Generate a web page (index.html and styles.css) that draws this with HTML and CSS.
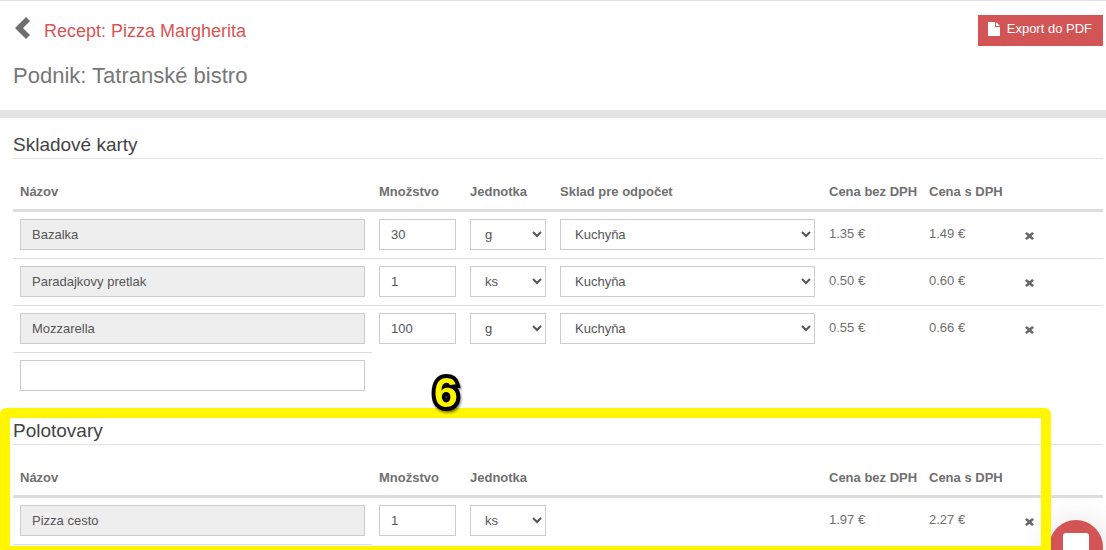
FILE: index.html
```html
<!DOCTYPE html>
<html lang="sk">
<head>
<meta charset="utf-8">
<title>Recept: Pizza Margherita</title>
<link rel="stylesheet" href="styles.css">
</head>
<body>
<svg class="sprite" aria-hidden="true">
  <symbol id="cross" viewBox="0 0 9 8"><path d="M0 1.8 1.8 0 4.5 2.2 7.2 0 9 1.8 6.3 4 9 6.2 7.2 8 4.5 5.8 1.8 8 0 6.2 2.7 4z"/></symbol>
</svg>
<header class="page-header">
  <div class="title-row">
    <a class="back" href="#" aria-label="Späť"><svg viewBox="0 0 15 22" aria-hidden="true"><path d="M11 0 15 4 8 11 15 18 11 22 0 11z"/></svg></a>
    <h1 class="title">Recept: Pizza Margherita</h1>
    <button class="export" type="button"><svg viewBox="0 0 12 14" aria-hidden="true"><path d="M0 0h7v5h5v9H0zM8 0l4 4H8z"/></svg>Export do PDF</button>
  </div>
  <h2 class="company">Podnik: Tatranské bistro</h2>
</header>
<main class="content">
  <section class="section">
    <h3 class="section-title">Skladové karty</h3>
    <table class="items">
      <colgroup><col><col class="c-qty"><col class="c-unit"><col class="c-stock"><col class="c-net"><col class="c-gross"><col class="c-action"></colgroup>
      <thead><tr><th>Názov</th><th>Množstvo</th><th>Jednotka</th><th>Sklad pre odpočet</th><th>Cena bez DPH</th><th>Cena s DPH</th><td></td></tr></thead>
      <tbody>
        <tr>
          <td><input class="field" aria-label="Názov" value="Bazalka" disabled></td>
          <td><input class="field" aria-label="Množstvo" value="30"></td>
          <td><select class="field" aria-label="Jednotka"><option>g</option></select></td>
          <td><select class="field" aria-label="Sklad pre odpočet"><option>Kuchyňa</option></select></td>
          <td class="price">1.35 €</td><td class="price">1.49 €</td>
          <td><button class="remove" type="button" aria-label="Odstrániť"><svg><use href="#cross"/></svg></button></td>
        </tr>
        <tr>
          <td><input class="field" aria-label="Názov" value="Paradajkovy pretlak" disabled></td>
          <td><input class="field" aria-label="Množstvo" value="1"></td>
          <td><select class="field" aria-label="Jednotka"><option>ks</option></select></td>
          <td><select class="field" aria-label="Sklad pre odpočet"><option>Kuchyňa</option></select></td>
          <td class="price">0.50 €</td><td class="price">0.60 €</td>
          <td><button class="remove" type="button" aria-label="Odstrániť"><svg><use href="#cross"/></svg></button></td>
        </tr>
        <tr>
          <td><input class="field" aria-label="Názov" value="Mozzarella" disabled></td>
          <td><input class="field" aria-label="Množstvo" value="100"></td>
          <td><select class="field" aria-label="Jednotka"><option>g</option></select></td>
          <td><select class="field" aria-label="Sklad pre odpočet"><option>Kuchyňa</option></select></td>
          <td class="price">0.55 €</td><td class="price">0.66 €</td>
          <td><button class="remove" type="button" aria-label="Odstrániť"><svg><use href="#cross"/></svg></button></td>
        </tr>
        <tr><td><input class="field" aria-label="Nová skladová karta"></td></tr>
      </tbody>
    </table>
  </section>
  <section class="section">
    <h3 class="section-title">Polotovary</h3>
    <table class="items">
      <colgroup><col><col class="c-qty"><col class="c-unit"><col class="c-stock"><col class="c-net"><col class="c-gross"><col class="c-action"></colgroup>
      <thead><tr><th>Názov</th><th>Množstvo</th><th>Jednotka</th><td></td><th>Cena bez DPH</th><th>Cena s DPH</th><td></td></tr></thead>
      <tbody>
        <tr>
          <td><input class="field" aria-label="Názov" value="Pizza cesto" disabled></td>
          <td><input class="field" aria-label="Množstvo" value="1"></td>
          <td><select class="field" aria-label="Jednotka"><option>ks</option></select></td>
          <td></td>
          <td class="price">1.97 €</td><td class="price">2.27 €</td>
          <td><button class="remove" type="button" aria-label="Odstrániť"><svg><use href="#cross"/></svg></button></td>
        </tr>
        <tr><td></td></tr>
      </tbody>
    </table>
  </section>
</main>
<button class="chat" type="button" aria-label="Chat"><svg viewBox="0 0 26 28" aria-hidden="true"><path d="M3 0h20a3 3 0 0 1 3 3v25l-6-4H3a3 3 0 0 1-3-3V3a3 3 0 0 1 3-3z"/></svg></button>
<div class="highlight"></div>
<div class="step">6</div>
</body>
</html>
```
FILE: styles.css
```css
* { box-sizing: border-box; }
body {
  margin: 0;
  height: 100vh;
  overflow: hidden;
  position: relative;
  background: #fff;
  color: #707070;
  font: 13px/18px "Liberation Sans", Arial, sans-serif;
}
h1, h2, h3 { margin: 0; font-weight: 400; }
svg { display: block; fill: currentColor; }
.sprite { display: none; }

.page-header {
  border-top: 1px solid #e2e2e2;
  border-bottom: 8px solid #e4e4e4;
  padding: 14px 3px 19px 13px;
}
.title-row { display: flex; align-items: flex-start; }
.back { padding: 2px 0 0 2px; color: #6e6e6e; }
.back svg { width: 15px; height: 22px; }
.title { margin-left: 14px; font-size: 18px; line-height: 32px; color: #d95454; }
.export {
  display: flex;
  align-items: center;
  gap: 7px;
  margin-left: auto;
  height: 31px;
  padding: 0 11px 4px 10px;
  border: 0;
  background: #d35455;
  color: #fff;
  font: inherit;
}
.export svg { width: 12px; height: 14px; }
.company { margin-top: 14px; font-size: 22px; line-height: 30px; color: #777; }

.content { padding: 14px 3px 0 13px; }
.section { margin-bottom: 19px; }
.section-title {
  border-bottom: 1px solid #e3e3e3;
  font-size: 19px;
  line-height: 26px;
  color: #444;
}
.items { width: 100%; margin-top: 14px; table-layout: fixed; border-collapse: separate; border-spacing: 0; }
.c-qty { width: 91px; }
.c-unit { width: 90px; }
.c-stock { width: 269px; }
.c-net { width: 100px; }
.c-gross { width: 96px; }
.c-action { width: 85px; }
.items th, .items td { padding: 7px; vertical-align: top; text-align: left; }
.items thead th, .items thead td { padding: 10px 7px 8px; border-bottom: 3px solid #ddd; white-space: nowrap; }
.items tbody td { padding-bottom: 8px; }
.items tbody tr + tr td { border-top: 1px solid #ddd; }
.items .price { line-height: 30px; }
.field {
  display: block;
  width: 100%;
  height: 31px;
  margin: 0;
  padding: 0 11px 1px;
  border: 1px solid #ccc;
  border-radius: 0;
  background: #fff;
  color: #555;
  font: inherit;
}
.field:disabled { background: #eee; }
select.field { padding: 0 0 0 10px; }
.remove { display: block; margin-top: 13px; padding: 0; border: 0; background: none; color: #666; }
.remove svg { width: 9px; height: 8px; }

.chat {
  position: absolute;
  right: 3px;
  bottom: -24px;
  display: flex;
  justify-content: center;
  align-items: center;
  width: 54px;
  height: 54px;
  padding: 0;
  border: 0;
  border-radius: 50%;
  background: #d35455;
  color: #fff;
  box-shadow: 0 4px 32px rgba(0, 0, 0, .16);
}
.chat svg { width: 26px; height: 28px; }
.highlight {
  position: absolute;
  top: 408px;
  left: 0;
  width: 95%;
  height: 148px;
  border: 10px solid #fff600;
  border-radius: 6px;
  pointer-events: none;
}
.step {
  position: absolute;
  top: 368px;
  left: 434px;
  font-size: 43px;
  line-height: 48px;
  font-weight: 700;
  color: #fff600;
  -webkit-text-stroke: 8px #000;
  paint-order: stroke fill;
  stroke-linejoin: round;
  filter: drop-shadow(1px 2px 1px rgba(0, 0, 0, .45));
}
```
